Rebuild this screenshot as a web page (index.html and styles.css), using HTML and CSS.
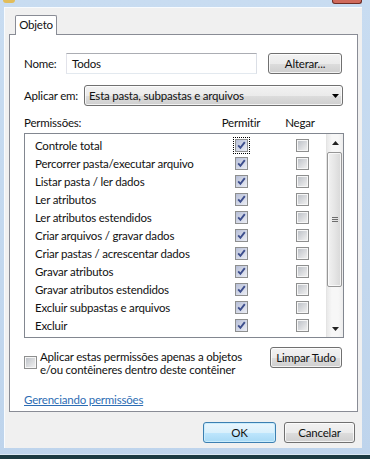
FILE: index.html
```html
<!DOCTYPE html>
<html lang="pt">
<head>
<meta charset="utf-8">
<title>Objeto</title>
<link rel="stylesheet" href="styles.css">
</head>
<body>
<div class="window">
  <div class="titlebar"><span class="app-icon"></span><span class="close-btn"></span></div>
  <div class="face">
    <div class="tabs"><div class="tab">Objeto</div></div>
    <div class="panel">
      <div class="name-row">
        <span class="lbl-name">Nome:</span>
        <div class="input">Todos</div>
        <div class="btn alter">Alterar...</div>
      </div>
      <div class="apply-row">
        <span class="lbl-apply">Aplicar em:</span>
        <div class="select"><span>Esta pasta, subpastas e arquivos</span><svg class="dd-arrow" width="7" height="4" viewBox="0 0 7 4"><polygon points="0,0 7,0 3.5,4" fill="#000"/></svg></div>
      </div>
      <div class="perm-header"><span class="ph-name">Permissões:</span><span class="ph-allow">Permitir</span><span class="ph-deny">Negar</span></div>
      <div class="listbox">
        <div class="rows">
          <div class="perm-row"><span class="perm-name">Controle total</span><span class="cb checked focus"><svg viewBox="0 0 11 11"><path d="M2.2 5.4 L4.4 7.8 L8.8 2.2"/></svg></span><span class="cb deny"></span></div>
          <div class="perm-row"><span class="perm-name">Percorrer pasta/executar arquivo</span><span class="cb checked"><svg viewBox="0 0 11 11"><path d="M2.2 5.4 L4.4 7.8 L8.8 2.2"/></svg></span><span class="cb deny"></span></div>
          <div class="perm-row"><span class="perm-name">Listar pasta / ler dados</span><span class="cb checked"><svg viewBox="0 0 11 11"><path d="M2.2 5.4 L4.4 7.8 L8.8 2.2"/></svg></span><span class="cb deny"></span></div>
          <div class="perm-row"><span class="perm-name">Ler atributos</span><span class="cb checked"><svg viewBox="0 0 11 11"><path d="M2.2 5.4 L4.4 7.8 L8.8 2.2"/></svg></span><span class="cb deny"></span></div>
          <div class="perm-row"><span class="perm-name">Ler atributos estendidos</span><span class="cb checked"><svg viewBox="0 0 11 11"><path d="M2.2 5.4 L4.4 7.8 L8.8 2.2"/></svg></span><span class="cb deny"></span></div>
          <div class="perm-row"><span class="perm-name">Criar arquivos / gravar dados</span><span class="cb checked"><svg viewBox="0 0 11 11"><path d="M2.2 5.4 L4.4 7.8 L8.8 2.2"/></svg></span><span class="cb deny"></span></div>
          <div class="perm-row"><span class="perm-name">Criar pastas / acrescentar dados</span><span class="cb checked"><svg viewBox="0 0 11 11"><path d="M2.2 5.4 L4.4 7.8 L8.8 2.2"/></svg></span><span class="cb deny"></span></div>
          <div class="perm-row"><span class="perm-name">Gravar atributos</span><span class="cb checked"><svg viewBox="0 0 11 11"><path d="M2.2 5.4 L4.4 7.8 L8.8 2.2"/></svg></span><span class="cb deny"></span></div>
          <div class="perm-row"><span class="perm-name">Gravar atributos estendidos</span><span class="cb checked"><svg viewBox="0 0 11 11"><path d="M2.2 5.4 L4.4 7.8 L8.8 2.2"/></svg></span><span class="cb deny"></span></div>
          <div class="perm-row"><span class="perm-name">Excluir subpastas e arquivos</span><span class="cb checked"><svg viewBox="0 0 11 11"><path d="M2.2 5.4 L4.4 7.8 L8.8 2.2"/></svg></span><span class="cb deny"></span></div>
          <div class="perm-row"><span class="perm-name">Excluir</span><span class="cb checked"><svg viewBox="0 0 11 11"><path d="M2.2 5.4 L4.4 7.8 L8.8 2.2"/></svg></span><span class="cb deny"></span></div>
          <div class="perm-row"><span class="perm-name">Permissões de leitura</span><span class="cb checked"><svg viewBox="0 0 11 11"><path d="M2.2 5.4 L4.4 7.8 L8.8 2.2"/></svg></span><span class="cb deny"></span></div>
        </div>
        <div class="scrollbar">
          <div class="sb-arrow"><svg width="7" height="4" viewBox="0 0 7 4"><polygon points="0,4 7,4 3.5,0" fill="#222"/></svg></div>
          <div class="sb-track">
            <div class="sb-thumb"><span class="grip"></span><span class="grip"></span><span class="grip"></span></div>
          </div>
          <div class="sb-arrow"><svg width="7" height="4" viewBox="0 0 7 4"><polygon points="0,0 7,0 3.5,4" fill="#222"/></svg></div>
        </div>
      </div>
      <div class="apply-only">
        <span class="cb deny cb-apply"></span>
        <div class="apply-text">Aplicar estas permissões apenas a objetos<br>e/ou contêineres dentro deste contêiner</div>
        <div class="btn limpar">Limpar Tudo</div>
      </div>
      <a class="link" href="#">Gerenciando permissões</a>
    </div>
    <div class="buttons">
      <div class="btn ok">OK</div>
      <div class="btn cancel">Cancelar</div>
    </div>
  </div>
  <div class="frame-bottom"></div>
  <div class="taskbar-edge"></div>
</div>
</body>
</html>
```
FILE: styles.css
```css
* { box-sizing: border-box; }
html, body { margin: 0; padding: 0; }
body {
  width: 370px;
  height: 459px;
  overflow: hidden;
  background: #c3d8ee;
  font-family: "Segoe UI", Lato, sans-serif;
  font-size: 11.5px;
  letter-spacing: -0.2px;
  color: #111;
}
.window {
  width: 370px;
  height: 459px;
  display: flex;
  flex-direction: column;
  background: linear-gradient(#c8dcf1, #bed4ec);
}
.titlebar {
  height: 7px;
  display: flex;
  justify-content: space-between;
  align-items: flex-start;
  padding: 0 8px 0 3px;
}
.app-icon {
  width: 12px;
  height: 3px;
  background: #e2bd5b;
  border-radius: 0 0 5px 5px;
}
.close-btn {
  width: 30px;
  height: 4px;
  background: #d06a5c;
  border: 1px solid #6e2c25;
  border-top: none;
  border-radius: 0 0 3px 3px;
}
.face {
  margin: 0 8px 0 4px;
  height: 441px;
  background: #f0f0f0;
  border-left: 1px solid #f8fbfe;
  border-top: 1px solid #f8fbfe;
  display: flex;
  flex-direction: column;
}
.tabs {
  display: flex;
  margin: 7px 0 -1px 10px;
}
.tab {
  position: relative;
  z-index: 1;
  height: 20px;
  width: 42px;
  border: 1px solid #898c95;
  border-bottom: none;
  border-radius: 2px 2px 0 0;
  background: #fff;
  line-height: 18px;
  text-align: center;
}
.panel {
  margin: 0 4px;
  height: 378px;
  border: 1px solid #898c95;
  background: #fff;
  padding: 18px 13px 0 14px;
  display: flex;
  flex-direction: column;
}
.name-row, .apply-row {
  display: flex;
  align-items: center;
  height: 21px;
}
.apply-row { margin-top: 11px; }
.lbl-name { width: 42px; }
.lbl-apply { width: 60px; white-space: nowrap; }
.input {
  width: 191px;
  height: 21px;
  border: 1px solid;
  border-color: #abadb3 #dbdfe6 #e3e9ef #e2e3ea;
  padding-left: 5px;
  line-height: 19px;
}
.btn {
  height: 21px;
  border: 1px solid #707070;
  border-radius: 3px;
  background: linear-gradient(#f2f2f2 0%, #ebebeb 50%, #dddddd 51%, #cfcfcf 100%);
  box-shadow: inset 0 0 0 1px rgba(255,255,255,0.75);
  text-align: center;
  line-height: 19px;
  white-space: nowrap;
}
.alter { width: 74px; margin-left: 11px; }
.select {
  width: 259px;
  height: 21px;
  border: 1px solid #707070;
  border-radius: 3px;
  background: linear-gradient(#f2f2f2 0%, #ebebeb 50%, #dddddd 51%, #cfcfcf 100%);
  box-shadow: inset 0 0 0 1px rgba(255,255,255,0.75);
  display: flex;
  align-items: center;
  justify-content: space-between;
  padding: 0 3px 0 4px;
  white-space: nowrap;
}
.perm-header {
  margin-top: 8px;
  height: 18px;
  line-height: 18px;
  display: flex;
}
.ph-name { flex: 1; }
.ph-allow { width: 40px; text-align: center; }
.ph-deny { width: 40px; text-align: center; margin-left: 19px; margin-right: 24px; }
.listbox {
  margin-top: 1px;
  height: 205px;
  border: 1px solid #828790;
  background: #fff;
  display: flex;
}
.rows {
  flex: 1;
  overflow: hidden;
  padding-top: 2px;
}
.perm-row {
  display: flex;
  align-items: center;
  height: 18px;
}
.perm-name {
  width: 210px;
  padding-left: 10px;
  white-space: nowrap;
}
.cb {
  width: 13px;
  height: 13px;
  flex: none;
  border: 1px solid #8e8f8f;
  padding: 1px;
  background: linear-gradient(135deg, #bfc3c9, #efefef) content-box, #f6f6f6;
  display: flex;
}
.cb.checked {
  background: linear-gradient(135deg, #b7bfd7, #eceef5) content-box, #f6f7fb;
  padding: 0;
}
.cb svg { width: 11px; height: 11px; }
.cb path {
  fill: none;
  stroke: #3d4e8d;
  stroke-width: 1.9;
}
.cb.deny { margin-left: 48px; }
.cb.focus { outline: 1px dotted #000; outline-offset: 1px; }
.scrollbar {
  width: 17px;
  display: flex;
  flex-direction: column;
  background: linear-gradient(90deg, #e9e9e9, #f7f7f7 30%, #f7f7f7 70%, #ededed);
  border-left: 1px solid #e4e4e4;
}
.sb-arrow {
  height: 17px;
  display: flex;
  align-items: center;
  justify-content: center;
}
.sb-track { flex: 1; }
.sb-thumb {
  margin: 1px 1px 0 0;
  height: 135px;
  border: 1px solid #979797;
  border-radius: 2px;
  background: linear-gradient(90deg, #f2f2f2, #e6e6e6 50%, #d8d8d8);
  box-shadow: inset 0 0 0 1px rgba(255,255,255,0.7);
  display: flex;
  flex-direction: column;
  align-items: center;
  justify-content: center;
  gap: 1px;
}
.grip {
  width: 6px;
  height: 1px;
  background: #6d6d6d;
}
.apply-only {
  margin-top: 9px;
  display: flex;
  align-items: flex-start;
}
.cb.cb-apply { margin: 9px 0 0 0; }
.apply-text {
  margin: 3px 0 0 3px;
  line-height: 13px;
  white-space: nowrap;
}
.limpar { width: 72px; margin-left: auto; margin-right: 2px; }
.link {
  margin-top: 16px;
  line-height: 15px;
  color: #2d6db4;
  text-decoration: underline;
  align-self: flex-start;
}
.buttons {
  display: flex;
  justify-content: flex-end;
  gap: 8px;
  margin: 10px 7px 0 0;
}
.ok {
  width: 73px;
  border-color: #3c7fb1;
  background: linear-gradient(#eaf6fd 0%, #d9f0fc 50%, #bee6fd 51%, #a7d9f5 100%);
  box-shadow: inset 0 0 0 1px #c9ecfc;
}
.cancel { width: 71px; }
.frame-bottom {
  flex: 1;
  border-bottom: 1px solid #dbe8f4;
}
.taskbar-edge {
  height: 4px;
  background: #1b3a42;
}
```
